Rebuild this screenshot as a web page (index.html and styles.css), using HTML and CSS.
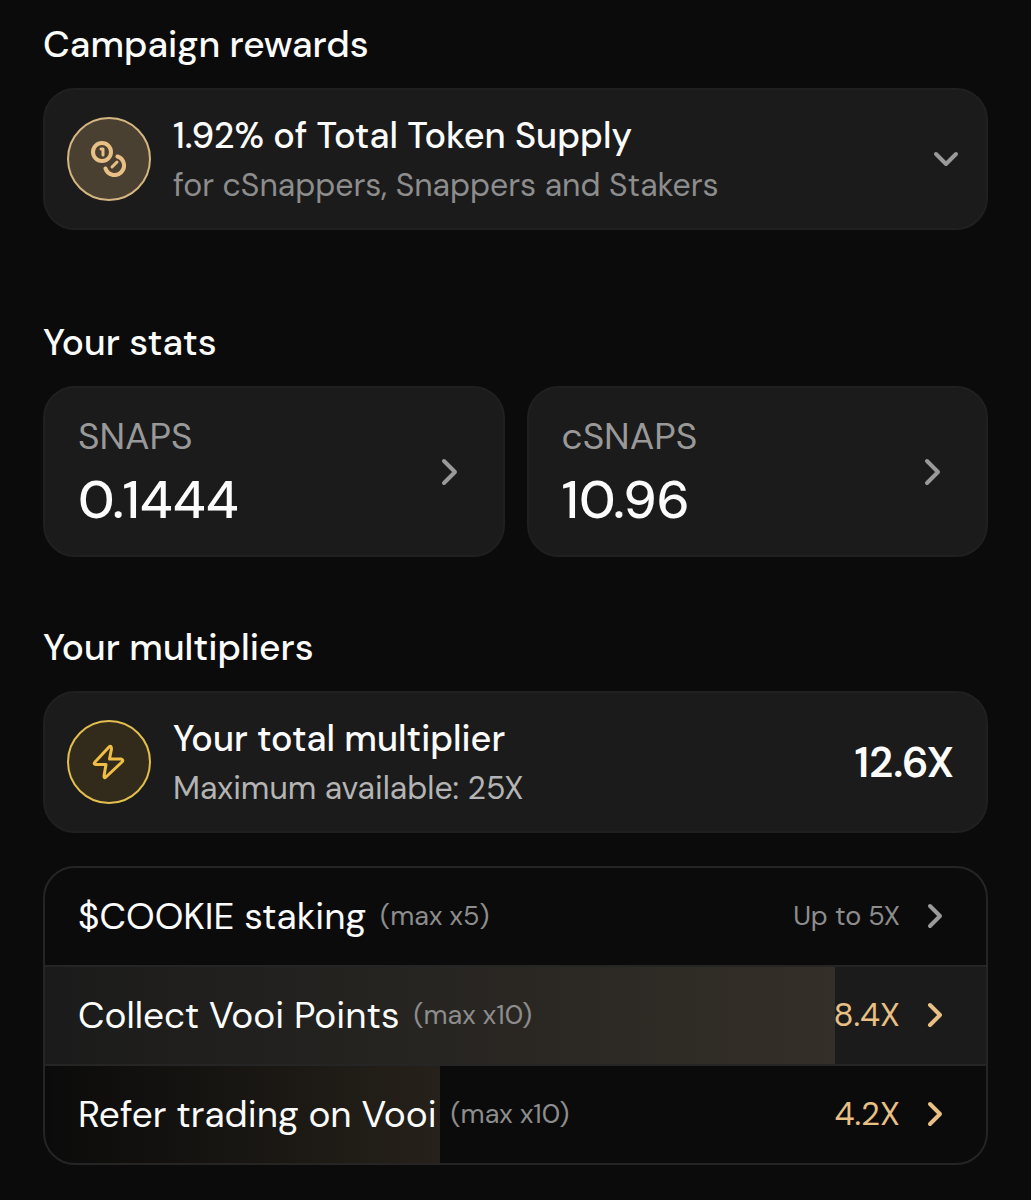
FILE: index.html
```html
<!DOCTYPE html>
<html lang="en">
<head>
    <meta charset="UTF-8">
    <meta name="viewport" content="width=device-width, initial-scale=1.0">
    <title>Campaign rewards</title>
    <link rel="stylesheet" href="styles.css">
</head>
<body>
    <main class="page">
        <section class="rewards">
            <h2 class="title">Campaign rewards</h2>
            <button type="button" class="card banner" aria-expanded="false">
                <span class="badge badge--coins">
                    <svg width="36" height="36" viewBox="0 0 36 36" fill="none" stroke="currentColor" stroke-width="4" stroke-linecap="round" aria-hidden="true">
                        <circle cx="11" cy="11" r="9"/>
                        <path d="M26.500 15.500a9.500 9.500 0 1 1-12 12"/>
                        <path d="M10 8h2v6" stroke-width="3" stroke-linejoin="round"/>
                        <path d="M21 26l5-5" stroke-width="3"/>
                    </svg>
                </span>
                <span class="banner__text">
                    <span class="banner__title">1.92% of Total Token Supply</span>
                    <span class="banner__note">for cSnappers, Snappers and Stakers</span>
                </span>
                <svg class="chevron" width="28" height="28" viewBox="0 0 28 28" aria-hidden="true"><path d="M4 9l10 10 10-10"/></svg>
            </button>
        </section>

        <section class="stats">
            <h2 class="title">Your stats</h2>
            <div class="stats__grid">
                <a href="#snaps" class="card stat">
                    <span class="stat__text">
                        <span class="stat__label">SNAPS</span>
                        <span class="stat__value">0.1444</span>
                    </span>
                    <svg class="chevron" width="28" height="28" viewBox="0 0 28 28" aria-hidden="true"><path d="M9 3l11 11-11 11"/></svg>
                </a>
                <a href="#csnaps" class="card stat">
                    <span class="stat__text">
                        <span class="stat__label">cSNAPS</span>
                        <span class="stat__value">10.96</span>
                    </span>
                    <svg class="chevron" width="28" height="28" viewBox="0 0 28 28" aria-hidden="true"><path d="M9 3l11 11-11 11"/></svg>
                </a>
            </div>
        </section>

        <section class="multipliers">
            <h2 class="title">Your multipliers</h2>
            <div class="card banner">
                <span class="badge badge--bolt">
                    <svg width="36" height="36" viewBox="0 0 36 36" fill="none" stroke="currentColor" stroke-width="3" stroke-linejoin="round" aria-hidden="true">
                        <path d="M18 3L4 18q-2 2 1 2.500h10L13 32q0 3 2 1l16-15q2-2-1-3H18.500l2-10q0-4-2.500-2z"/>
                    </svg>
                </span>
                <div class="banner__text">
                    <span class="banner__title">Your total multiplier</span>
                    <span class="banner__note banner__note--light">Maximum available: 25X</span>
                </div>
                <strong class="total">12.6X</strong>
            </div>
            <ul class="list">
                <li>
                    <a href="#staking" class="row">
                        <span class="row__name">$COOKIE staking</span>
                        <span class="row__max">(max x5)</span>
                        <span class="row__value">Up to 5X</span>
                        <svg class="chevron" width="28" height="28" viewBox="0 0 28 28" aria-hidden="true"><path d="M10 4l10 10-10 10"/></svg>
                    </a>
                </li>
                <li>
                    <a href="#points" class="row row--gold row--filled" style="--progress: 84%">
                        <span class="row__name">Collect Vooi Points</span>
                        <span class="row__max">(max x10)</span>
                        <span class="row__value">8.4X</span>
                        <svg class="chevron" width="28" height="28" viewBox="0 0 28 28" aria-hidden="true"><path d="M10 4l10 10-10 10"/></svg>
                    </a>
                </li>
                <li>
                    <a href="#refer" class="row row--gold" style="--progress: 42%">
                        <span class="row__name">Refer trading on Vooi</span>
                        <span class="row__max">(max x10)</span>
                        <span class="row__value">4.2X</span>
                        <svg class="chevron" width="28" height="28" viewBox="0 0 28 28" aria-hidden="true"><path d="M10 4l10 10-10 10"/></svg>
                    </a>
                </li>
            </ul>
        </section>
    </main>
</body>
</html>
```
FILE: styles.css
```css
*{
    box-sizing: border-box;
}
body{
    margin: 0;
    background-color: #0b0b0b;
    color: #fcfcfc;
    font-family: "DM Sans", "Inter", sans-serif;
}
a{
    color: inherit;
    text-decoration: none;
}
.page{
    padding: 20px 43px 36px;
}
.rewards{
    margin-bottom: 88px;
}
.stats{
    margin-bottom: 66px;
}
.title{
    margin: 0 0 20px;
    font-size: 37px;
    line-height: 48px;
    font-weight: 500;
}
.card{
    background-color: #1b1b1b;
    border: 2px solid #202020;
    border-radius: 32px;
}
.banner{
    display: flex;
    align-items: center;
    gap: 22px;
    width: 100%;
    padding: 20px 26px 20px 22px;
    color: inherit;
    font-family: inherit;
    text-align: left;
}
button.banner{
    cursor: pointer;
}
.badge{
    display: flex;
    align-items: center;
    justify-content: center;
    flex-shrink: 0;
    width: 84px;
    height: 84px;
    border: 2px solid;
    border-radius: 50%;
}
.badge--coins{
    background-color: #4a4032;
    border-color: #d5b680;
    color: #e8c085;
}
.badge--bolt{
    background-color: #322b1b;
    border-color: #e3bf4e;
    color: #f0bd45;
}
.banner__text{
    display: flex;
    flex-direction: column;
    flex: 1;
}
.banner__title{
    font-size: 36px;
    line-height: 52px;
    font-weight: 500;
}
.banner__note{
    color: #8d8d8d;
    font-size: 32px;
    line-height: 46px;
}
.banner__note--light{
    color: #b4b4b4;
}
.total{
    padding-right: 6px;
    font-size: 42px;
    font-weight: 600;
}
.chevron{
    flex-shrink: 0;
    fill: none;
    stroke: #9a9a9a;
    stroke-width: 4;
    stroke-linecap: round;
    stroke-linejoin: round;
}
.stats__grid{
    display: grid;
    grid-template-columns: 1fr 1fr;
    gap: 22px;
}
.stat{
    display: flex;
    align-items: center;
    justify-content: space-between;
    padding: 20px 40px 20px 33px;
}
.stat__text{
    display: flex;
    flex-direction: column;
}
.stat__label{
    color: #999999;
    font-size: 37px;
    line-height: 56px;
}
.stat__value{
    font-size: 53px;
    line-height: 71px;
    font-weight: 500;
}
.list{
    margin: 33px 0 0;
    padding: 0;
    overflow: hidden;
    border: 2px solid #252525;
    border-radius: 32px;
    list-style: none;
}
.list li + li{
    border-top: 2px solid #252525;
}
.row{
    display: flex;
    align-items: center;
    gap: 14px;
    height: 97px;
    padding: 0 38px 2px 33px;
    background-image: linear-gradient(to right, transparent, rgba(232, 192, 133, 0.12));
    background-repeat: no-repeat;
    background-size: var(--progress, 0) 100%;
}
.row--filled{
    background-color: #1b1b1b;
}
.row__name{
    font-size: 37px;
}
.row__max{
    color: #8d8d8d;
    font-size: 27px;
}
.row__value{
    margin-left: auto;
    color: #8d8d8d;
    font-size: 27px;
}
.row .chevron{
    margin-left: 6px;
}
.row--gold .row__value{
    color: #e8c085;
    font-size: 33px;
}
.row--gold .chevron{
    stroke: #e8c085;
}
```
